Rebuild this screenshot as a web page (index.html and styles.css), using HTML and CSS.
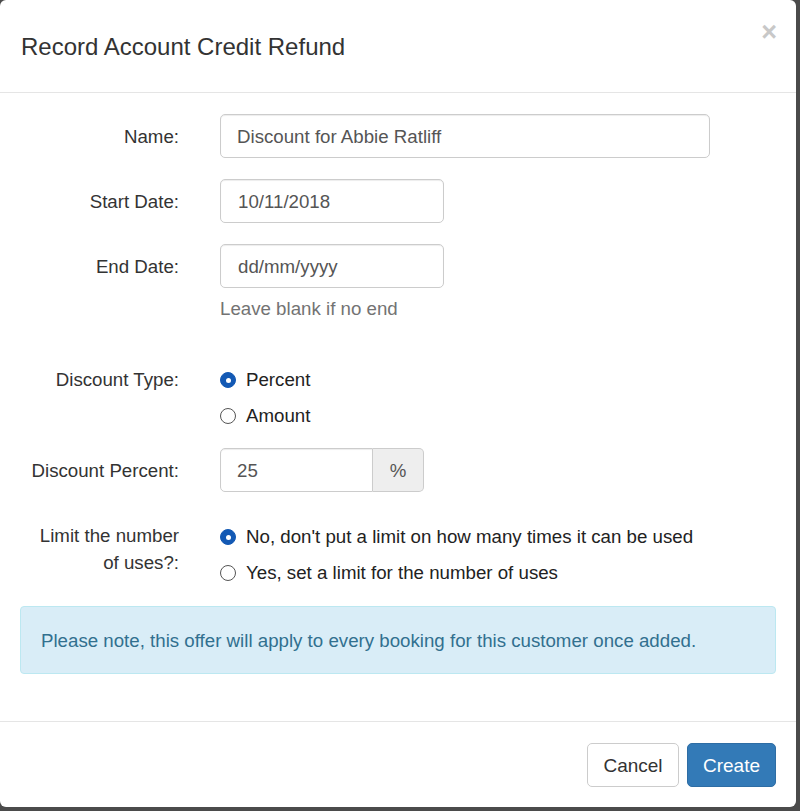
FILE: index.html
```html
<!DOCTYPE html>
<html>
<head>
<meta charset="utf-8">
<link rel="stylesheet" href="styles.css">
</head>
<body>
<div class="modal">
  <div class="modal-header">
    <h4 class="modal-title">Record Account Credit Refund</h4>
    <span class="close">&times;</span>
  </div>
  <div class="modal-body">
    <div class="row">
      <label class="lbl">Name:</label>
      <div class="ctl"><input class="input wide" type="text" value="Discount for Abbie Ratliff"></div>
    </div>
    <div class="row">
      <label class="lbl">Start Date:</label>
      <div class="ctl"><input class="input date" type="text" value="10/11/2018"></div>
    </div>
    <div class="row row-help">
      <label class="lbl">End Date:</label>
      <div class="ctl">
        <input class="input date" type="text" value="dd/mm/yyyy">
        <div class="help">Leave blank if no end</div>
      </div>
    </div>
    <div class="row row-radio">
      <label class="lbl lbl-radio">Discount Type:</label>
      <div class="ctl">
        <div class="radio"><span class="dot on"></span>Percent</div>
        <div class="radio"><span class="dot"></span>Amount</div>
      </div>
    </div>
    <div class="row row-group">
      <label class="lbl">Discount Percent:</label>
      <div class="ctl">
        <div class="group"><input class="input grp" type="text" value="25"><span class="addon">%</span></div>
      </div>
    </div>
    <div class="row row-radio2">
      <label class="lbl lbl-multi">Limit the number<br>of uses?:</label>
      <div class="ctl">
        <div class="radio r2"><span class="dot on"></span>No, don't put a limit on how many times it can be used</div>
        <div class="radio r2"><span class="dot"></span>Yes, set a limit for the number of uses</div>
      </div>
    </div>
    <div class="alert">Please note, this offer will apply to every booking for this customer once added.</div>
  </div>
  <div class="modal-footer">
    <button class="btn btn-default">Cancel</button>
    <button class="btn btn-primary">Create</button>
  </div>
</div>
</body>
</html>
```

FILE: styles.css
```css
html, body {
  margin: 0;
  padding: 0;
  background: #4b4b4b;
  font-family: "Liberation Sans", Arial, Helvetica, sans-serif;
}
.modal {
  width: 796px;
  height: 807px;
  background: #fff;
  border-radius: 6px;
  box-sizing: border-box;
  display: flex;
  flex-direction: column;
  color: #333;
  font-size: 18.7px;
}
.modal-header {
  height: 93px;
  box-sizing: border-box;
  border-bottom: 1px solid #e5e5e5;
  position: relative;
  padding: 0 21px;
  display: flex;
  align-items: center;
}
.modal-title {
  margin: 0;
  font-weight: normal;
  font-size: 24px;
  color: #333;
  padding-top: 1px;
}
.close {
  position: absolute;
  right: 19px;
  top: 17px;
  font-size: 27px;
  font-weight: bold;
  color: #c8c8c8;
  line-height: 30px;
}
.modal-body {
  padding: 21px 20px 0 20px;
  height: 628px;
  box-sizing: border-box;
}
.row {
  display: grid;
  grid-template-columns: 159px 1fr;
  column-gap: 41px;
  margin-bottom: 21px;
}
.lbl {
  text-align: right;
  line-height: 24px;
  padding-top: 11px;
  color: #333;
}
.input {
  height: 44px;
  box-sizing: border-box;
  border: 1px solid #ccc;
  border-radius: 5px;
  font-family: inherit;
  font-size: 18.7px;
  color: #555;
  padding: 2px 17px 0;
  display: block;
  box-shadow: inset 0 1px 1px rgba(0,0,0,.075);
  outline: none;
}
.wide { width: 490px; padding-left: 16px; }
.date { width: 224px; }
.row-help { margin-bottom: 40px; }
.help {
  color: #737373;
  margin-top: 9px;
  line-height: 24px;
}
.row-radio { margin-bottom: 15px; }
.lbl-radio { line-height: 24px; padding-top: 7px; }
.radio {
  display: flex;
  align-items: center;
  height: 36px;
  color: #222;
  padding-top: 1px;
  box-sizing: border-box;
}
.dot {
  width: 16px;
  height: 16px;
  box-sizing: border-box;
  border: 1px solid #555;
  border-radius: 50%;
  background: #fff;
  margin-right: 10px;
  position: relative;
  flex: none;
}
.dot.on {
  background: #1359b4;
  border-color: #1359b4;
}
.dot.on::after {
  content: "";
  position: absolute;
  left: 5px;
  top: 5px;
  width: 5px;
  height: 5px;
  border-radius: 50%;
  background: #fff;
}
.row-group { margin-bottom: 26px; }
.group {
  display: flex;
  width: 204px;
}
.grp {
  width: 153px;
  border-radius: 5px 0 0 5px;
  padding-left: 16px;
}
.addon {
  width: 51px;
  height: 44px;
  box-sizing: border-box;
  border: 1px solid #ccc;
  border-left: 0;
  border-radius: 0 5px 5px 0;
  background: #eee;
  color: #555;
  display: flex;
  align-items: center;
  justify-content: center;
  padding-top: 2px;
}
.row-radio2 { margin-bottom: 15px; }
.row-radio2 .radio:nth-child(2) { height: 37px; }
.lbl-multi {
  line-height: 27px;
  padding-top: 4px;
}
.alert {
  height: 68px;
  box-sizing: border-box;
  background: #d9edf7;
  border: 1px solid #bce8f1;
  border-radius: 4px;
  color: #31708f;
  padding: 2px 20px 0;
  display: flex;
  align-items: center;
}
.modal-footer {
  flex: 1;
  border-top: 1px solid #e5e5e5;
  display: flex;
  justify-content: flex-end;
  align-items: flex-start;
  padding: 21px 20px 0 0;
  gap: 8px;
}
.btn {
  height: 44px;
  box-sizing: border-box;
  border-radius: 5px;
  font-family: inherit;
  font-size: 19px;
  padding: 2px 0 0;
  border: 1px solid #ccc;
}
.btn-default {
  background: #fff;
  color: #333;
  width: 92px;
}
.btn-primary {
  background: #337ab7;
  border-color: #2e6da4;
  color: #fff;
  width: 89px;
}
```
